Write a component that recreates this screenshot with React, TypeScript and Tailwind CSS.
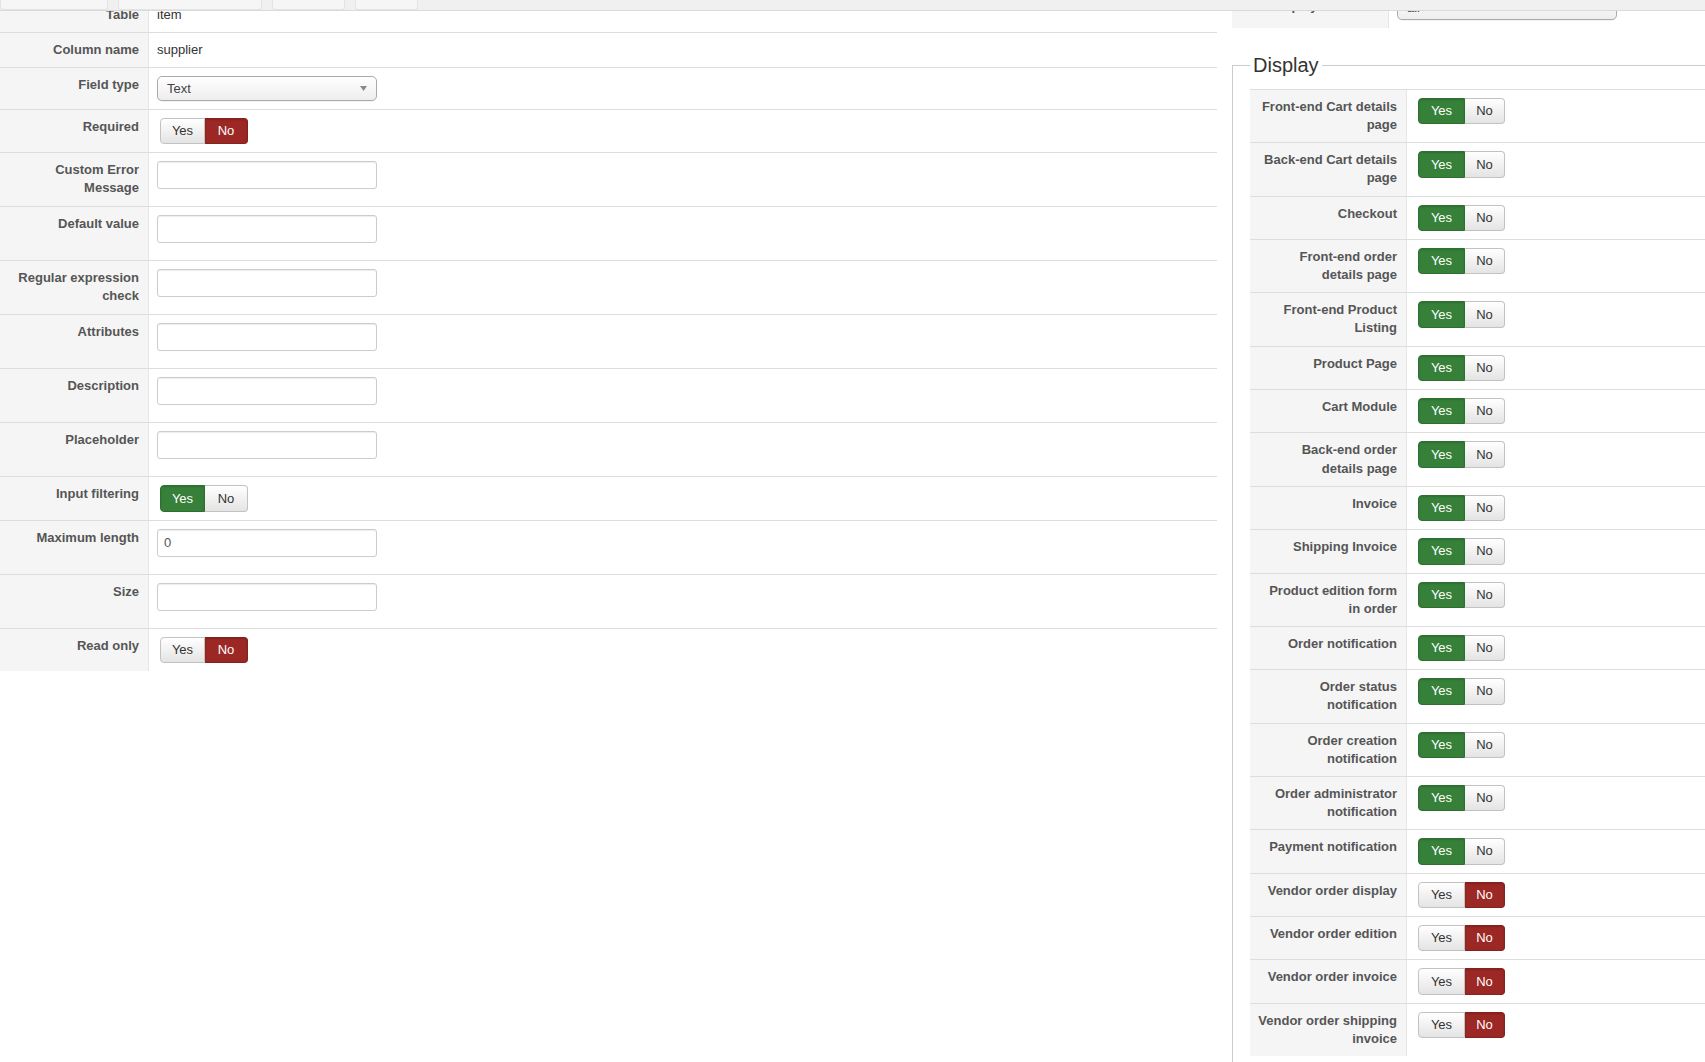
import React from "react";

const inactive =
  "bg-linear-to-b from-white to-[#e4e4e4] border-[#c2c2c2] text-[#333] shadow-[inset_0_1px_0_rgba(255,255,255,0.6)]";

function Toggle({ yes, side }: { yes: boolean; side: "left" | "right" }) {
  const yesW = side === "left" ? "w-[45px]" : "w-[47px]";
  const noW = side === "left" ? "w-[43px]" : "w-[40px]";
  return (
    <div className="ml-[3px] flex h-[26.4px] text-[13px] leading-none">
      <span
        className={`${yesW} flex items-center justify-center rounded-l-[4px] border pb-px ${
          yes
            ? "bg-[#37803a] border-[#2e6f30] text-white shadow-[inset_0_1px_2px_rgba(0,0,0,0.15)]"
            : inactive
        }`}
      >
        Yes
      </span>
      <span
        className={`${noW} flex items-center justify-center rounded-r-[4px] border border-l-0 pb-px ${
          !yes
            ? "bg-[#9b2824] border-[#86211e] text-white shadow-[inset_0_1px_2px_rgba(0,0,0,0.15)]"
            : inactive
        }`}
      >
        No
      </span>
    </div>
  );
}

function TextInput({ value = "" }: { value?: string }) {
  return (
    <input
      readOnly
      value={value}
      className="mb-[9px] block h-[28px] w-[220px] rounded-[3px] border border-[#cccccc] bg-white px-[6px] text-[13px] text-[#555] shadow-[inset_0_1px_1px_rgba(0,0,0,0.075)] outline-none"
    />
  );
}

function Select({ value }: { value: string }) {
  return (
    <div className="flex h-[25px] w-[220px] items-center justify-between rounded-[5px] border border-[#aaaaaa] bg-linear-to-b from-white to-[#eeeeee] pl-[9px] pr-[9px] text-[13px] text-[#444] shadow-[0_1px_1px_rgba(0,0,0,0.06)]">
      <span>{value}</span>
      <svg width="7" height="5" viewBox="0 0 7 5">
        <path d="M0 0 L7 0 L3.5 5 Z" fill="#8a8a8a" />
      </svg>
    </div>
  );
}

function Lines({ lines }: { lines: string[] }) {
  return (
    <>
      {lines.map((l, i) => (
        <div key={i} className="whitespace-nowrap">
          {l}
        </div>
      ))}
    </>
  );
}

function LeftRow({ label, children }: { label: string[]; children: React.ReactNode }) {
  return (
    <div className="flex border-t border-[#dddddd]">
      <div className="w-[149px] shrink-0 border-r border-[#e6e6e6] bg-[#f5f5f5] py-2 pl-2 pr-[9px] text-right text-[13px] font-bold leading-[18px] text-[#555]">
        <Lines lines={label} />
      </div>
      <div className="flex-1 px-2 py-2 text-[13px] leading-[18px] text-[#333]">{children}</div>
    </div>
  );
}

function RightRow({ label, children }: { label: string[]; children: React.ReactNode }) {
  return (
    <div className="flex border-t border-[#dddddd]">
      <div className="w-[157px] shrink-0 border-r border-[#e6e6e6] bg-[#f5f5f5] py-2 pl-2 pr-[9px] text-right text-[13px] font-bold leading-[18.15px] text-[#555]">
        <Lines lines={label} />
      </div>
      <div className="flex-1 px-2 py-2 text-[13px] leading-[18px] text-[#333]">{children}</div>
    </div>
  );
}

const displayRows: { label: string[]; yes: boolean }[] = [
  { label: ["Front-end Cart details", "page"], yes: true },
  { label: ["Back-end Cart details", "page"], yes: true },
  { label: ["Checkout"], yes: true },
  { label: ["Front-end order", "details page"], yes: true },
  { label: ["Front-end Product", "Listing"], yes: true },
  { label: ["Product Page"], yes: true },
  { label: ["Cart Module"], yes: true },
  { label: ["Back-end order", "details page"], yes: true },
  { label: ["Invoice"], yes: true },
  { label: ["Shipping Invoice"], yes: true },
  { label: ["Product edition form", "in order"], yes: true },
  { label: ["Order notification"], yes: true },
  { label: ["Order status", "notification"], yes: true },
  { label: ["Order creation", "notification"], yes: true },
  { label: ["Order administrator", "notification"], yes: true },
  { label: ["Payment notification"], yes: true },
  { label: ["Vendor order display"], yes: false },
  { label: ["Vendor order edition"], yes: false },
  { label: ["Vendor order invoice"], yes: false },
  { label: ["Vendor order shipping", "invoice"], yes: false },
];

export default function App() {
  return (
    <div className="relative h-[1062px] w-full overflow-hidden bg-white font-['Liberation_Sans',Arial,Helvetica,sans-serif]">
      <div className="flex items-start">
        {/* Left column */}
        <div className="mt-[-3px] w-[1217px] shrink-0">
          <LeftRow label={["Table"]}>item</LeftRow>
          <LeftRow label={["Column name"]}>supplier</LeftRow>
          <LeftRow label={["Field type"]}>
            <Select value="Text" />
          </LeftRow>
          <LeftRow label={["Required"]}>
            <Toggle yes={false} side="left" />
          </LeftRow>
          <LeftRow label={["Custom Error", "Message"]}>
            <TextInput />
          </LeftRow>
          <LeftRow label={["Default value"]}>
            <TextInput />
          </LeftRow>
          <LeftRow label={["Regular expression", "check"]}>
            <TextInput />
          </LeftRow>
          <LeftRow label={["Attributes"]}>
            <TextInput />
          </LeftRow>
          <LeftRow label={["Description"]}>
            <TextInput />
          </LeftRow>
          <LeftRow label={["Placeholder"]}>
            <TextInput />
          </LeftRow>
          <LeftRow label={["Input filtering"]}>
            <Toggle yes={true} side="left" />
          </LeftRow>
          <LeftRow label={["Maximum length"]}>
            <TextInput value="0" />
          </LeftRow>
          <LeftRow label={["Size"]}>
            <TextInput />
          </LeftRow>
          <LeftRow label={["Read only"]}>
            <Toggle yes={false} side="left" />
          </LeftRow>
        </div>

        {/* Right column */}
        <div className="ml-[15px] mt-[-12px] w-[520px] shrink-0">
          <div className="flex border-t border-[#dddddd]">
            <div className="w-[157px] shrink-0 border-r border-[#e6e6e6] bg-[#f5f5f5] py-2 pl-2 pr-[9px] text-right text-[13px] font-bold leading-[18px] text-[#555]">
              Display limited to
            </div>
            <div className="flex-1 px-2 pb-2 pt-[6px]">
              <Select value="all" />
            </div>
          </div>

          <fieldset className="mt-4 border border-[#cccccc] pb-4 pl-[17px] pt-[3px]">
            <legend className="px-[3px] text-[20px] font-normal leading-[42px] text-[#333]">Display</legend>
            <div className="w-full">
              {displayRows.map((r, i) => (
                <RightRow key={i} label={r.label}>
                  <Toggle yes={r.yes} side="right" />
                </RightRow>
              ))}
            </div>
          </fieldset>
        </div>
      </div>

      {/* Top toolbar overlay */}
      <div className="absolute left-0 top-0 flex h-[11px] w-full gap-[10px] border-b border-[#dadada] bg-[#f0f0f0]">
        <div className="h-[10px] w-[108px] rounded-b-[3px] border-x border-b border-[#e3e3e3] bg-[#f6f6f6]" />
        <div className="h-[10px] w-[144px] rounded-b-[3px] border-x border-b border-[#e3e3e3] bg-[#f6f6f6]" />
        <div className="h-[10px] w-[73px] rounded-b-[3px] border-x border-b border-[#e3e3e3] bg-[#f6f6f6]" />
        <div className="h-[10px] w-[63px] rounded-b-[3px] border-x border-b border-[#e3e3e3] bg-[#f6f6f6]" />
      </div>
    </div>
  );
}
